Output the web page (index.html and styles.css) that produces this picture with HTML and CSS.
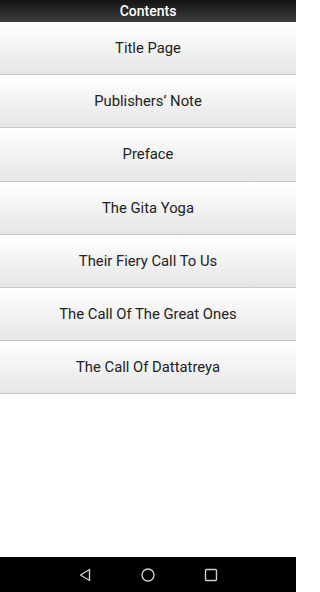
FILE: index.html
```html
<!DOCTYPE html>
<html>
<head>
<meta charset="utf-8">
<link rel="stylesheet" href="styles.css">
</head>
<body>
<div class="screen">
  <header class="header">Contents</header>
  <ul class="list">
    <li class="item">Title Page</li>
    <li class="item">Publishers’ Note</li>
    <li class="item">Preface</li>
    <li class="item">The Gita Yoga</li>
    <li class="item">Their Fiery Call To Us</li>
    <li class="item">The Call Of The Great Ones</li>
    <li class="item">The Call Of Dattatreya</li>
  </ul>
  <div class="spacer"></div>
  <nav class="navbar">
    <svg class="nav-icon" width="16" height="16" viewBox="0 0 16 16"><path d="M12.5 2.5 L3.5 8 L12.5 13.5 Z" fill="none" stroke="#cfcfcf" stroke-width="1.4" stroke-linejoin="round"/></svg>
    <svg class="nav-icon" width="16" height="16" viewBox="0 0 16 16"><circle cx="8" cy="8" r="6" fill="none" stroke="#cfcfcf" stroke-width="1.4"/></svg>
    <svg class="nav-icon" width="16" height="16" viewBox="0 0 16 16"><rect x="2.5" y="2.5" width="11" height="11" rx="1" fill="none" stroke="#cfcfcf" stroke-width="1.4"/></svg>
  </nav>
</div>
</body>
</html>
```
FILE: styles.css
```css
html, body {
  margin: 0;
  padding: 0;
  background: #ffffff;
  overflow: hidden;
}
.screen {
  width: 296px;
  height: 592px;
  display: flex;
  flex-direction: column;
  font-family: Roboto, "Liberation Sans", sans-serif;
}
.header {
  height: 22px;
  flex: none;
  display: flex;
  align-items: center;
  justify-content: center;
  color: #ffffff;
  font-size: 14px;
  font-weight: 500;
  background: linear-gradient(to bottom, #141414, #3c3c3c);
  box-sizing: border-box;
  padding-bottom: 1px;
}
.list {
  list-style: none;
  margin: 0;
  padding: 0;
}
.item {
  height: 52.2px;
  border-bottom: 1px solid #c8c8c8;
  display: flex;
  align-items: center;
  justify-content: center;
  color: #222222;
  font-size: 14.8px;
  background: linear-gradient(to bottom, #ffffff, #e6e6e6);
}
.spacer {
  flex: 1;
}
.navbar {
  height: 35px;
  flex: none;
  background: #000000;
  display: flex;
  align-items: center;
  justify-content: center;
  gap: 47px;
}
.nav-icon {
  display: block;
}
```
